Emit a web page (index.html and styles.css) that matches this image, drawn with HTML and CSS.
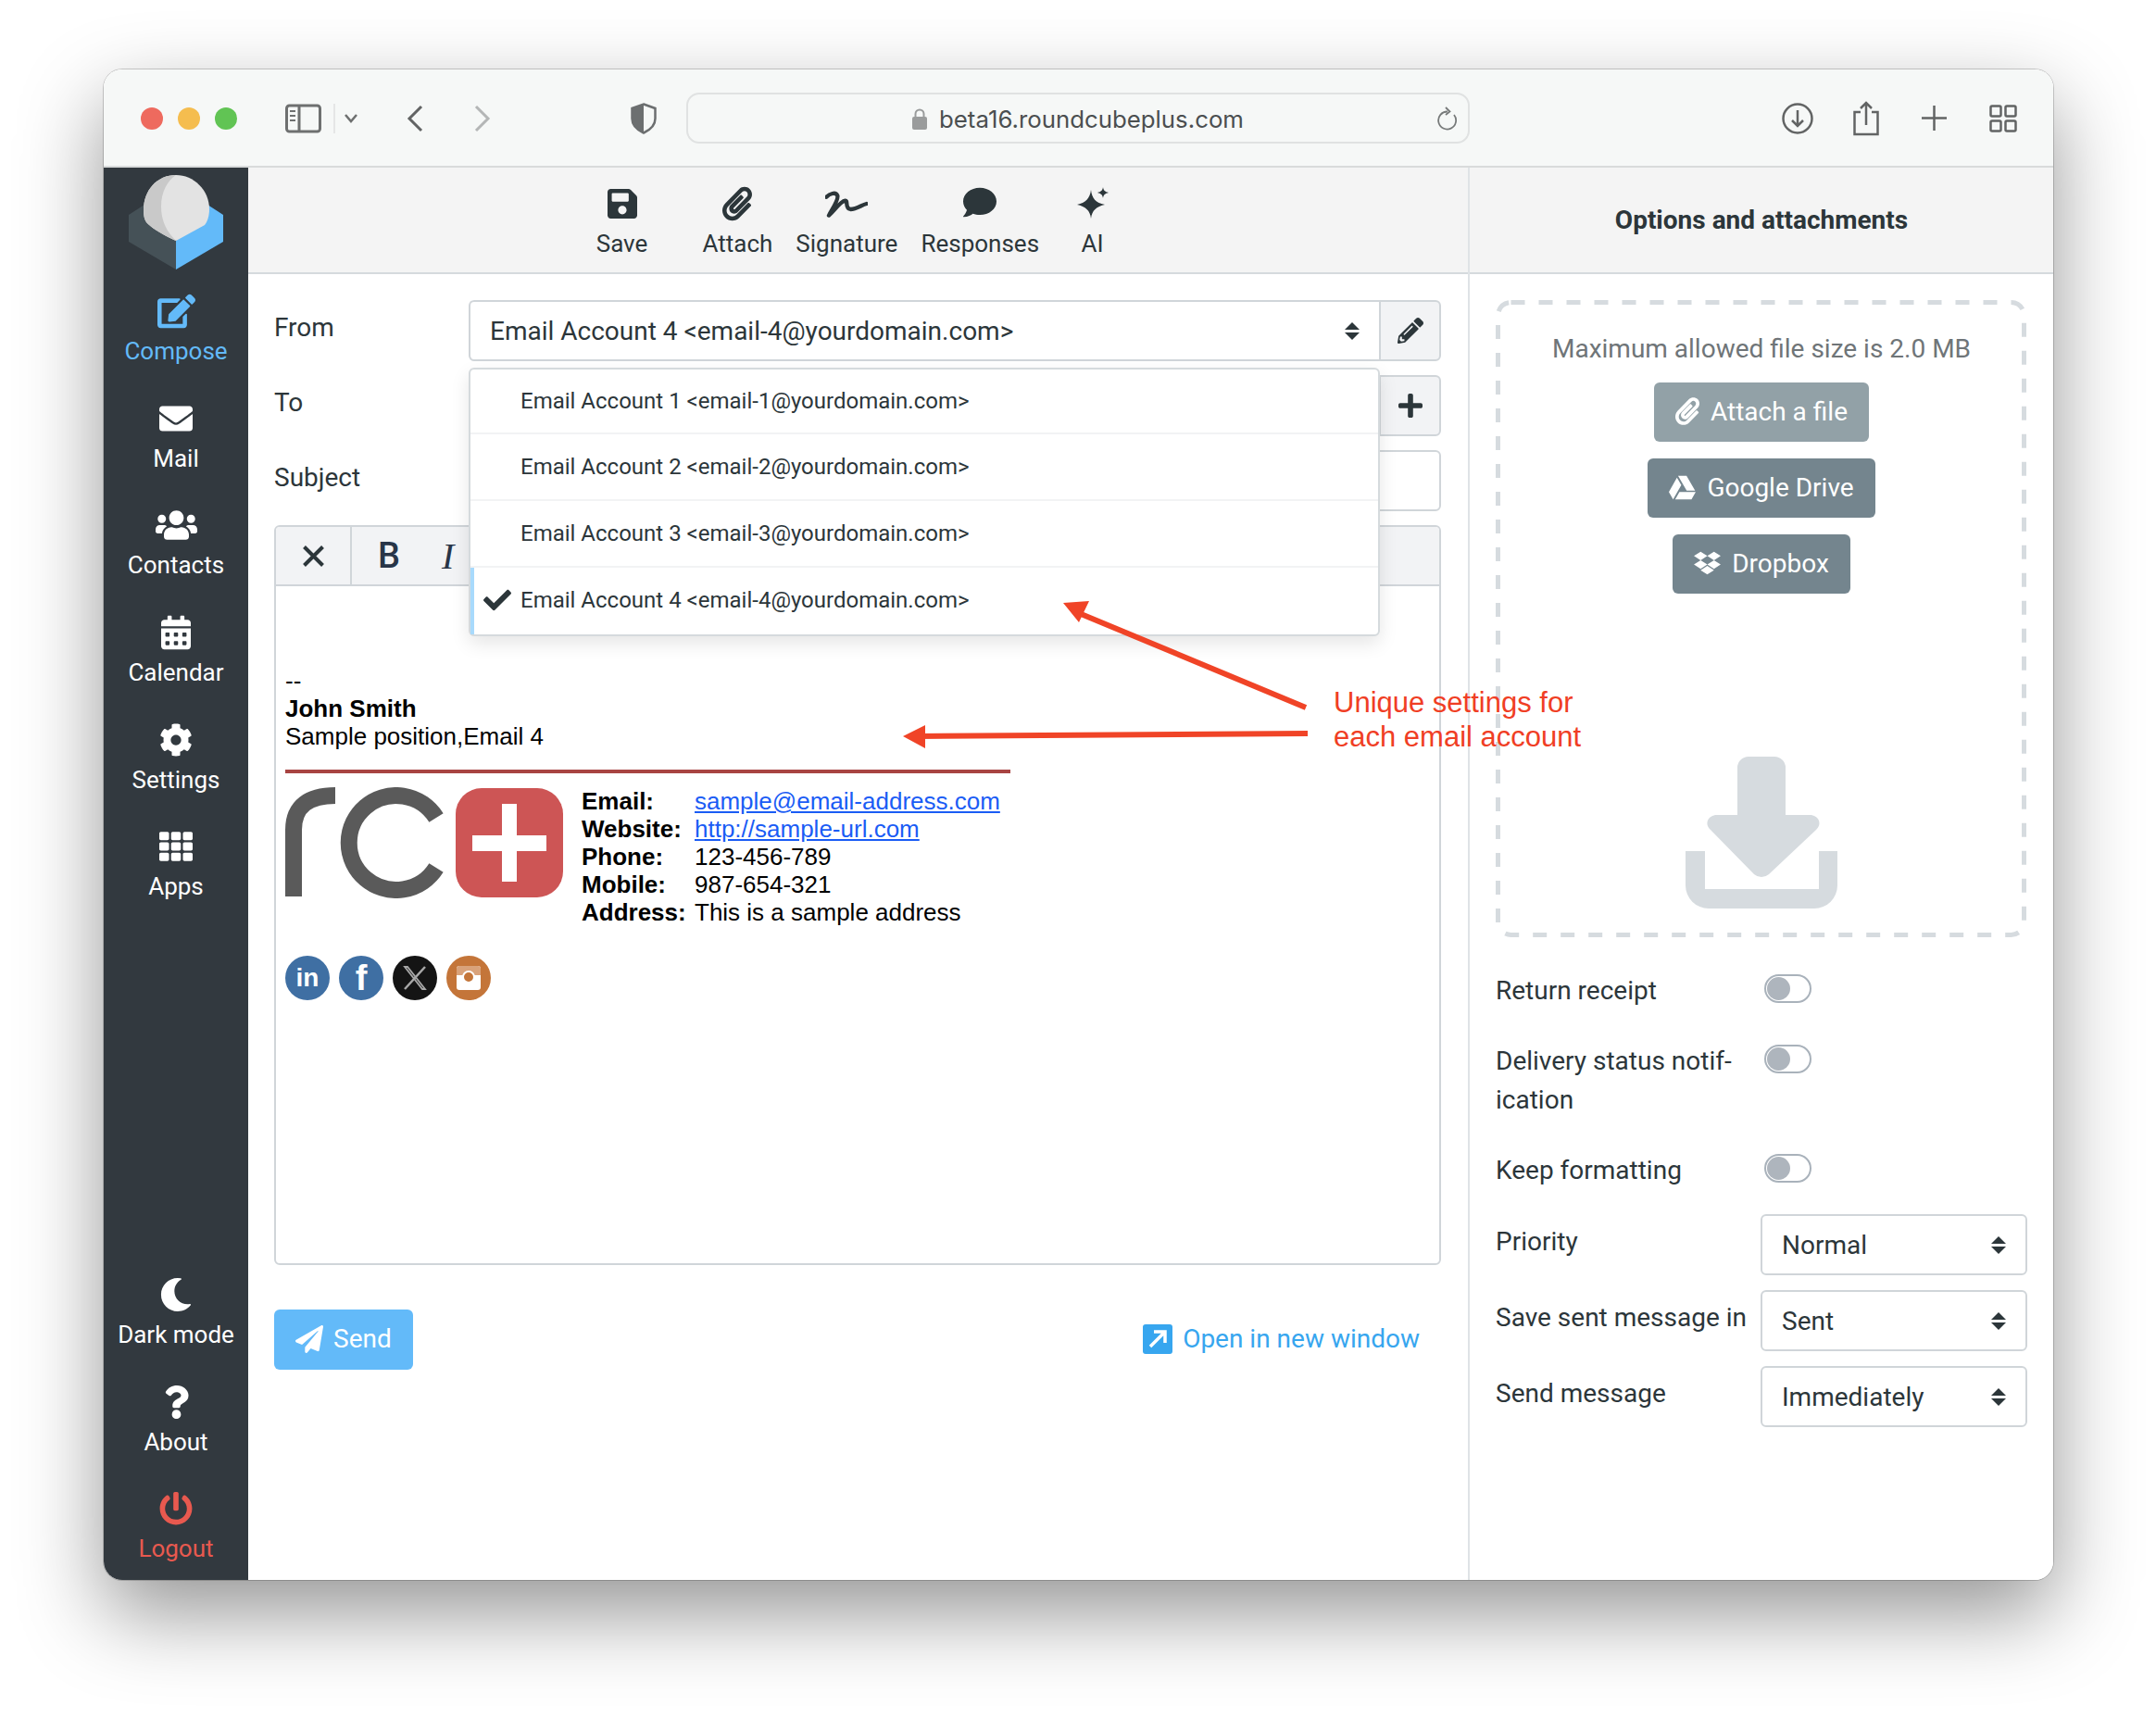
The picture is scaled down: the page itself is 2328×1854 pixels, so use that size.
FILE: index.html
```html
<!DOCTYPE html>
<html>
<head>
<meta name="viewport" content="width=device-width, initial-scale=1">
<title>Compose</title>
<link rel="stylesheet" href="styles.css">
</head>
<body>

<div class="window">

  <!-- browser chrome -->
  <header class="titlebar">
    <span class="light red"></span>
    <span class="light yellow"></span>
    <span class="light green"></span>

    <svg class="tb-side" width="80" height="32" viewBox="0 0 80 32" fill="none" stroke="#6e7070">
      <rect x="1.5" y="2" width="36" height="28" rx="3" stroke-width="3"/>
      <path d="M15 2v28" stroke-width="3"/>
      <path d="M5 8h6M5 13h6M5 18h6" stroke-width="2"/>
      <path d="M53 0v32" stroke="#dfe1e1" stroke-width="1.5"/>
      <path d="M65 12l6 7 6-7" stroke-width="2.5"/>
    </svg>
    <svg class="tb-back" width="18" height="30" viewBox="0 0 18 30" fill="none" stroke="#626464" stroke-width="3"><path d="M16 2L3 15l13 13"/></svg>
    <svg class="tb-fwd" width="18" height="30" viewBox="0 0 18 30" fill="none" stroke="#b4b6b6" stroke-width="3"><path d="M2 2l13 13L2 28"/></svg>
    <svg class="tb-shield" width="28" height="34" viewBox="0 0 28 34">
      <path d="M14 1.5L26.5 6v11c0 8-7 13-12.500 15.500C8.500 30 1.500 25 1.500 17V6z" fill="none" stroke="#6c6f70" stroke-width="2.500"/>
      <path d="M14 1.500L1.500 6v11c0 8 7 13 12.500 15.500z" fill="#6c6f70"/>
    </svg>

    <div class="url">
      <svg width="16" height="23" viewBox="0 0 16 23"><path d="M3.500 10V6a4.500 4.500 0 0 1 9 0v4" fill="none" stroke="#9a9c9c" stroke-width="2"/><rect y="9" width="16" height="14" rx="2" fill="#9a9c9c"/></svg>
      <span>beta16.roundcubeplus.com</span>
      <svg class="url-reload" width="24" height="26" viewBox="0 0 24 26" fill="none" stroke="#777a7a" stroke-width="1.800"><path d="M19 9a9.500 9.500 0 1 1-7-3.500"/><path d="M10 1l4.500 4.500L10 9"/></svg>
    </div>

    <svg class="tb-dl" width="34" height="34" viewBox="0 0 34 34" fill="none" stroke="#626464" stroke-width="2.500"><circle cx="17" cy="17" r="15.500"/><path d="M17 8v17M11 19l6 6 6-6"/></svg>
    <svg class="tb-share" width="30" height="38" viewBox="0 0 30 38" fill="none" stroke="#626464" stroke-width="2.500"><path d="M9 12H2.500v24h25V12H21"/><path d="M15 26V2M9 8l6-6 6 6"/></svg>
    <svg class="tb-plus" width="27" height="27" viewBox="0 0 27 27" stroke="#626464" stroke-width="2.500"><path d="M13.500 0v27M0 13.500h27"/></svg>
    <svg class="tb-tabs" width="30" height="30" viewBox="0 0 30 30" fill="none" stroke="#626464" stroke-width="2.500"><rect x="1.500" y="1.500" width="11" height="11" rx="1.500"/><rect x="17.500" y="1.500" width="11" height="11" rx="1.500"/><rect x="1.500" y="17.500" width="11" height="11" rx="1.500"/><rect x="17.500" y="17.500" width="11" height="11" rx="1.500"/></svg>
  </header>

  <div class="app">

    <!-- left menu -->
    <nav class="sidebar">
      <div class="logo">
        <svg width="102" height="102" viewBox="0 0 102 102">
          <path d="M0 43L20 30 51 71V102L0 72z" fill="#455157"/>
          <path d="M102 43L82 30 51 71V102L102 72z" fill="#63baf9"/>
          <path d="M51 0C70 0 87 16 87 37 87 44 85 50 82 54L51 71C40 66 25 58 19 51 17 48 16 44 16 38 16 16 31 0 51 0z" fill="#e3e3e3"/>
          <path d="M51 0C31 0 16 16 16 38 16 44 17 48 19 51 25 58 40 66 51 71 40 60 35 48 35 34 35 18 42 6 51 0z" fill="#c9c9c9"/>
        </svg>
      </div>
      <a class="nav-item active">
        <svg width="41" height="38" viewBox="0 0 576 512" fill="currentColor"><path d="M402.600 83.200l90.200 90.200c3.800 3.800 3.800 10 0 13.800L274.400 405.600l-92.800 10.300c-12.400 1.400-22.900-9.100-21.500-21.500l10.300-92.800L388.800 83.200c3.800-3.800 10-3.800 13.800 0zm162-22.900l-48.800-48.800c-15.200-15.200-39.900-15.200-55.200 0l-35.400 35.400c-3.800 3.800-3.800 10 0 13.800l90.200 90.200c3.800 3.800 10 3.800 13.800 0l35.400-35.400c15.200-15.300 15.200-40 0-55.200zM384 346.200V448H64V128h229.800c3.200 0 6.200-1.300 8.500-3.500l40-40c7.600-7.600 2.200-20.500-8.500-20.500H48C21.500 64 0 85.500 0 112v352c0 26.500 21.500 48 48 48h352c26.500 0 48-21.500 48-48V306.200c0-10.700-12.900-16-20.500-8.500l-40 40c-2.200 2.300-3.500 5.300-3.500 8.500z"/></svg>
        <span>Compose</span>
      </a>
      <a class="nav-item">
        <svg width="36" height="36" viewBox="0 0 512 512" fill="currentColor"><path d="M502.300 190.800c3.900-3.100 9.700-.2 9.700 4.700V400c0 26.500-21.500 48-48 48H48c-26.500 0-48-21.500-48-48V195.600c0-5 5.700-7.800 9.700-4.700 22.400 17.400 52.100 39.500 154.100 113.600 21.100 15.400 56.700 47.800 92.200 47.600 35.700.3 72-32.800 92.300-47.600 102-74.100 131.600-96.300 154-113.700zM256 320c23.200.4 56.600-29.200 73.400-41.400 132.700-96.300 142.800-104.700 173.400-128.700 5.800-4.500 9.200-11.500 9.200-18.900v-19c0-26.500-21.500-48-48-48H48C21.500 64 0 85.500 0 112v19c0 7.400 3.400 14.300 9.200 18.900 30.600 23.900 40.700 32.400 173.400 128.700 16.800 12.200 50.200 41.800 73.400 41.400z"/></svg>
        <span>Mail</span>
      </a>
      <a class="nav-item">
        <svg width="45" height="36" viewBox="0 0 640 512" fill="currentColor"><path d="M96 224c35.300 0 64-28.700 64-64s-28.700-64-64-64-64 28.700-64 64 28.700 64 64 64zm448 0c35.300 0 64-28.700 64-64s-28.700-64-64-64-64 28.700-64 64 28.700 64 64 64zm32 32h-64c-17.600 0-33.500 7.100-45.100 18.600 40.300 22.100 68.900 62 75.100 109.400h66c17.700 0 32-14.300 32-32v-32c0-35.300-28.700-64-64-64zm-256 0c61.900 0 112-50.100 112-112S381.900 32 320 32 208 82.100 208 144s50.100 112 112 112zm76.800 32h-8.300c-20.800 10-43.900 16-68.500 16s-47.600-6-68.500-16h-8.300C179.600 288 128 339.600 128 403.200V432c0 26.500 21.500 48 48 48h288c26.500 0 48-21.500 48-48v-28.800c0-63.600-51.600-115.200-115.200-115.200zm-223.700-13.400C161.500 263.100 145.600 256 128 256H64c-35.300 0-64 28.700-64 64v32c0 17.700 14.300 32 32 32h65.900c6.300-47.400 34.900-87.300 75.200-109.400z"/></svg>
        <span>Contacts</span>
      </a>
      <a class="nav-item">
        <svg width="32" height="37" viewBox="0 0 448 512" fill="currentColor"><path d="M0 464c0 26.500 21.500 48 48 48h352c26.500 0 48-21.500 48-48V192H0v272zm320-196c0-6.600 5.400-12 12-12h40c6.600 0 12 5.400 12 12v40c0 6.600-5.400 12-12 12h-40c-6.600 0-12-5.400-12-12v-40zm0 128c0-6.600 5.400-12 12-12h40c6.600 0 12 5.400 12 12v40c0 6.600-5.400 12-12 12h-40c-6.600 0-12-5.400-12-12v-40zM192 268c0-6.600 5.400-12 12-12h40c6.600 0 12 5.400 12 12v40c0 6.600-5.400 12-12 12h-40c-6.600 0-12-5.400-12-12v-40zm0 128c0-6.600 5.400-12 12-12h40c6.600 0 12 5.400 12 12v40c0 6.600-5.400 12-12 12h-40c-6.600 0-12-5.400-12-12v-40zM64 268c0-6.600 5.400-12 12-12h40c6.600 0 12 5.400 12 12v40c0 6.600-5.400 12-12 12H76c-6.600 0-12-5.400-12-12v-40zm0 128c0-6.600 5.400-12 12-12h40c6.600 0 12 5.400 12 12v40c0 6.600-5.400 12-12 12H76c-6.600 0-12-5.400-12-12v-40zM400 64h-48V16c0-8.800-7.200-16-16-16h-32c-8.800 0-16 7.200-16 16v48H160V16c0-8.800-7.200-16-16-16h-32c-8.800 0-16 7.200-16 16v48H48C21.500 64 0 85.500 0 112v48h448v-48c0-26.500-21.500-48-48-48z"/></svg>
        <span>Calendar</span>
      </a>
      <a class="nav-item">
        <svg width="36" height="36" viewBox="0 0 512 512" fill="currentColor"><path d="M487.400 315.700l-42.600-24.600c4.300-23.200 4.300-47 0-70.200l42.600-24.600c4.900-2.800 7.100-8.600 5.500-14-11.100-35.600-30-67.800-54.700-94.600-3.800-4.100-10-5.100-14.800-2.300L380.800 110c-17.900-15.400-38.500-27.300-60.800-35.100V25.800c0-5.600-3.900-10.500-9.400-11.700-36.700-8.200-74.300-7.800-109.200 0-5.500 1.200-9.400 6.100-9.400 11.700V75c-22.200 7.900-42.800 19.800-60.800 35.100L88.700 85.500c-4.900-2.800-11-1.900-14.800 2.300-24.700 26.700-43.600 58.900-54.700 94.600-1.700 5.400.6 11.200 5.500 14L67.300 221c-4.300 23.200-4.300 47 0 70.200l-42.600 24.600c-4.900 2.800-7.100 8.600-5.500 14 11.100 35.600 30 67.800 54.700 94.600 3.800 4.100 10 5.100 14.800 2.300l42.600-24.600c17.900 15.400 38.500 27.300 60.800 35.100v49.200c0 5.600 3.900 10.500 9.400 11.700 36.700 8.200 74.300 7.800 109.200 0 5.500-1.200 9.400-6.100 9.400-11.700v-49.200c22.200-7.900 42.800-19.800 60.800-35.100l42.600 24.600c4.900 2.800 11 1.900 14.800-2.300 24.700-26.700 43.600-58.900 54.700-94.600 1.500-5.500-.7-11.300-5.600-14.100zM256 336c-44.100 0-80-35.900-80-80s35.900-80 80-80 80 35.900 80 80-35.900 80-80 80z"/></svg>
        <span>Settings</span>
      </a>
      <a class="nav-item">
        <svg width="36" height="36" viewBox="0 0 512 512" fill="currentColor"><path d="M149.333 56v80c0 13.255-10.745 24-24 24H24c-13.255 0-24-10.745-24-24V56c0-13.255 10.745-24 24-24h101.333c13.255 0 24 10.745 24 24zm181.334 240v-80c0-13.255-10.745-24-24-24H205.333c-13.255 0-24 10.745-24 24v80c0 13.255 10.745 24 24 24h101.333c13.256 0 24.001-10.745 24.001-24zm32-240v80c0 13.255 10.745 24 24 24H488c13.255 0 24-10.745 24-24V56c0-13.255-10.745-24-24-24H387.667c-13.255 0-24 10.745-24 24zm-32 80V56c0-13.255-10.745-24-24-24H205.333c-13.255 0-24 10.745-24 24v80c0 13.255 10.745 24 24 24h101.333c13.256 0 24.001-10.745 24.001-24zm-205.334 56H24c-13.255 0-24 10.745-24 24v80c0 13.255 10.745 24 24 24h101.333c13.255 0 24-10.745 24-24v-80c0-13.255-10.745-24-24-24zM0 376v80c0 13.255 10.745 24 24 24h101.333c13.255 0 24-10.745 24-24v-80c0-13.255-10.745-24-24-24H24c-13.255 0-24 10.745-24 24zm386.667-56H488c13.255 0 24-10.745 24-24v-80c0-13.255-10.745-24-24-24H386.667c-13.255 0-24 10.745-24 24v80c0 13.255 10.745 24 24 24zm0 160H488c13.255 0 24-10.745 24-24v-80c0-13.255-10.745-24-24-24H386.667c-13.255 0-24 10.745-24 24v80c0 13.255 10.745 24 24 24zM181.333 376v80c0 13.255 10.745 24 24 24h101.333c13.255 0 24-10.745 24-24v-80c0-13.255-10.745-24-24-24H205.333c-13.255 0-24 10.745-24 24z"/></svg>
        <span>Apps</span>
      </a>

      <a class="nav-item nav-bottom">
        <svg width="36" height="36" viewBox="0 0 512 512" fill="currentColor"><path d="M283.211 512c78.962 0 151.079-35.925 198.857-94.792 7.068-8.708-.639-21.430-11.562-19.350-124.203 23.654-238.262-71.576-238.262-196.954 0-72.222 38.662-138.635 101.498-174.394 9.686-5.512 7.250-20.197-3.756-22.230A258.156 258.156 0 0 0 283.211 0c-141.309 0-256 114.511-256 256 0 141.309 114.511 256 256 256z"/></svg>
        <span>Dark mode</span>
      </a>
      <a class="nav-item">
        <svg width="27" height="36" viewBox="0 0 384 512" fill="currentColor"><path d="M202.021 0C122.202 0 70.503 32.703 29.914 91.026c-7.363 10.580-5.093 25.086 5.178 32.874l43.138 32.709c10.373 7.865 25.132 6.026 33.253-4.148 25.049-31.381 43.630-49.449 82.757-49.449 30.764 0 68.816 19.799 68.816 49.631 0 22.552-18.617 34.134-48.993 51.164-35.423 19.860-82.299 44.576-82.299 106.405V320c0 13.255 10.745 24 24 24h72.471c13.255 0 24-10.745 24-24v-5.773c0-42.860 125.268-44.645 125.268-160.627C377.504 66.256 286.902 0 202.021 0zM192 373.459c-38.196 0-69.271 31.075-69.271 69.271 0 38.195 31.075 69.270 69.271 69.270s69.271-31.075 69.271-69.271-31.075-69.270-69.271-69.270z"/></svg>
        <span>About</span>
      </a>
      <a class="nav-item logout">
        <svg width="36" height="36" viewBox="0 0 512 512" fill="currentColor"><path d="M400 54.100c63 45 104 118.600 104 201.900 0 136.800-110.800 247.700-247.500 248C120 504.300 8.200 393 8 256.400 7.900 173.100 48.900 99.300 111.800 54.200c11.700-8.300 28-4.800 35 7.700L162.600 90c5.900 10.500 3.100 23.800-6.600 31-41.500 30.800-68 79.600-68 134.900-.1 92.300 74.500 168.100 168 168.100 91.600 0 168.600-74.200 168-169.100-.3-51.800-24.700-101.800-68.100-134-9.700-7.200-12.400-20.500-6.500-30.900l15.800-28.100c7-12.400 23.200-16.100 34.800-7.800zM296 264V24c0-13.300-10.700-24-24-24h-32c-13.300 0-24 10.700-24 24v240c0 13.300 10.700 24 24 24h32c13.300 0 24-10.700 24-24z"/></svg>
        <span>Logout</span>
      </a>
    </nav>

    <!-- compose column -->
    <main class="compose">
      <div class="toolbar">
        <a class="tool tool-save">
          <svg width="32" height="36" viewBox="0 0 448 512" fill="currentColor"><path d="M433.941 129.941l-83.882-83.882A48 48 0 0 0 316.118 32H48C21.490 32 0 53.490 0 80v352c0 26.510 21.490 48 48 48h352c26.510 0 48-21.490 48-48V163.882a48 48 0 0 0-14.059-33.941zM224 416c-35.346 0-64-28.654-64-64 0-35.346 28.654-64 64-64s64 28.654 64 64c0 35.346-28.654 64-64 64zm96-304.520V212c0 6.627-5.373 12-12 12H76c-6.627 0-12-5.373-12-12V108c0-6.627 5.373-12 12-12h228.520c3.183 0 6.235 1.264 8.485 3.515l3.480 3.480A11.996 11.996 0 0 1 320 111.480z"/></svg>
          <span>Save</span>
        </a>
        <a class="tool">
          <svg width="32" height="36" viewBox="0 0 448 512" fill="currentColor"><path d="M43.246 466.142c-58.430-60.289-57.341-157.511 1.386-217.581L254.392 34c44.316-45.332 116.351-45.336 160.671 0 43.890 44.894 43.943 117.329 0 162.276L232.214 383.128c-29.855 30.537-78.633 30.111-107.982-.998-28.275-29.970-27.368-77.473 1.452-106.953l143.743-146.835c6.182-6.314 16.312-6.422 22.626-.241l22.861 22.379c6.315 6.182 6.422 16.312.241 22.626L171.427 319.927c-4.932 5.045-5.236 13.428-.648 18.292 4.372 4.634 11.245 4.711 15.688.165l182.849-186.851c19.613-20.062 19.613-52.725-.011-72.798-19.189-19.627-49.957-19.637-69.154 0L90.390 293.295c-34.763 35.560-35.299 93.120-1.191 128.313 34.010 35.093 88.985 35.137 123.058.286l172.060-175.999c6.177-6.319 16.307-6.433 22.626-.256l22.877 22.364c6.319 6.177 6.434 16.307.256 22.626l-172.060 175.998c-59.576 60.938-155.943 60.216-214.770-.485z"/></svg>
          <span>Attach</span>
        </a>
        <a class="tool">
          <svg width="46" height="36" viewBox="0 0 138 108" fill="none" stroke="currentColor" stroke-width="13" stroke-linecap="round" stroke-linejoin="round"><path d="M4 32C14 22 34 14 40 28 44 42 22 72 12 92 30 76 50 46 64 44 76 42 62 68 82 72 102 72 118 58 134 54"/></svg>
          <span>Signature</span>
        </a>
        <a class="tool">
          <svg width="36" height="36" viewBox="0 0 512 512" fill="currentColor"><path d="M256 32C114.600 32 0 125.100 0 240c0 49.600 21.400 95 57 130.700C44.500 421.100 2.700 466 2.200 466.500c-2.200 2.300-2.800 5.700-1.500 8.700S4.800 480 8 480c66.300 0 116-31.800 140.600-51.400 32.700 12.300 69 19.400 107.400 19.400 141.400 0 256-93.100 256-208S397.400 32 256 32z" transform="translate(0 -20)"/></svg>
          <span>Responses</span>
        </a>
        <a class="tool tool-ai">
          <svg width="34" height="36" viewBox="0 0 34 36" fill="currentColor"><path d="M15 3c1 9 5 14 15 16-9 2-14 6-15 15C14 25 9 21 0 19c9-2 14-7 15-16z"/><path d="M28 0c.5 3.500 2 5 6 6-4 1-5.500 2.500-6 6-.5-3.500-2-5-6-6 4-1 5.500-2.500 6-6z"/></svg>
          <span>AI</span>
        </a>
      </div>

      <div class="compose-body">
        <div class="form-row from-row">
          <label class="form-label">From</label>
          <div class="input-group">
            <div class="select-box">
              <span>Email Account 4 &lt;email-4@yourdomain.com&gt;</span>
              <svg class="spin" width="16" height="19" viewBox="0 0 16 19" fill="currentColor"><path d="M8 0l8 8H0zM0 11h16l-8 8z"/></svg>
            </div>
            <div class="addon">
              <svg width="28" height="28" viewBox="0 0 512 512" fill="currentColor"><path d="M497.900 142.100l-46.100 46.100c-4.700 4.700-12.300 4.700-17 0l-111-111c-4.700-4.700-4.700-12.300 0-17l46.100-46.100c18.700-18.700 49.100-18.700 67.900 0l60.100 60.100c18.800 18.700 18.800 49.100 0 67.900zM284.200 99.800L21.600 362.400.4 483.900c-2.900 16.400 11.400 30.600 27.800 27.800l121.500-21.300 262.600-262.600c4.700-4.700 4.700-12.300 0-17l-111-111c-4.800-4.700-12.400-4.700-17.100 0zM124.100 339.900c-5.500-5.500-5.500-14.300 0-19.800l154-154c5.500-5.500 14.300-5.500 19.800 0s5.500 14.300 0 19.800l-154 154c-5.500 5.500-14.300 5.500-19.800 0zM88 424h48v36.300l-64.500 11.300-31.100-31.100L51.700 376H88v48z"/></svg>
            </div>
          </div>

          <ul class="identity-menu">
            <li>Email Account 1 &lt;email-1@yourdomain.com&gt;</li>
            <li>Email Account 2 &lt;email-2@yourdomain.com&gt;</li>
            <li>Email Account 3 &lt;email-3@yourdomain.com&gt;</li>
            <li class="selected">
              <svg width="30" height="30" viewBox="0 0 512 512" fill="currentColor"><path d="M173.898 439.404l-166.400-166.400c-9.997-9.997-9.997-26.206 0-36.204l36.203-36.204c9.997-9.998 26.207-9.998 36.204 0L192 312.690 432.095 72.596c9.997-9.997 26.207-9.997 36.204 0l36.203 36.204c9.997 9.997 9.997 26.206 0 36.204l-294.400 294.401c-9.998 9.997-26.207 9.997-36.204-.001z"/></svg>
              Email Account 4 &lt;email-4@yourdomain.com&gt;
            </li>
          </ul>
        </div>

        <div class="form-row">
          <label class="form-label">To</label>
          <div class="input-group">
            <div class="select-box"></div>
            <div class="addon">
              <svg width="26" height="30" viewBox="0 0 448 512" fill="currentColor"><path d="M416 208H272V64c0-17.670-14.330-32-32-32h-32c-17.670 0-32 14.330-32 32v144H32c-17.670 0-32 14.330-32 32v32c0 17.670 14.330 32 32 32h144v144c0 17.670 14.330 32 32 32h32c17.670 0 32-14.330 32-32V304h144c17.670 0 32-14.330 32-32v-32c0-17.670-14.330-32-32-32z"/></svg>
            </div>
          </div>
        </div>

        <div class="form-row">
          <label class="form-label">Subject</label>
          <div class="input-group">
            <div class="select-box"></div>
          </div>
        </div>

        <div class="editor">
          <div class="editor-tools">
            <div class="editor-close">
              <svg width="23" height="23" viewBox="0 0 23 23" stroke="currentColor" stroke-width="4"><path d="M1.500 1.500l20 20M21.500 1.500l-20 20"/></svg>
            </div>
            <span class="ed-bold">B</span>
            <span class="ed-italic">I</span>
          </div>
          <div class="editor-content">
            <div class="sig-dash">--</div>
            <div><b>John Smith</b></div>
            <div>Sample position,Email 4</div>
            <div class="sig-line"></div>
            <div class="sig-card">
              <svg class="sig-logo" width="300" height="120" viewBox="0 0 300 120">
                <path d="M9 118V46C9 20 26 9 54 9" fill="none" stroke="#5a5a5a" stroke-width="18"/>
                <path d="M163 33A51 51 0 1 0 163 87" fill="none" stroke="#5a5a5a" stroke-width="18"/>
                <rect x="184" y="1" width="116" height="118" rx="28" fill="#cd5555"/>
                <path d="M202 52h80v17h-80zM234 18h16v84h-16z" fill="#fff"/>
              </svg>
              <table class="sig-table">
                <tr><th>Email:</th><td><a>sample@email-address.com</a></td></tr>
                <tr><th>Website:</th><td><a>http://sample-url.com</a></td></tr>
                <tr><th>Phone:</th><td>123-456-789</td></tr>
                <tr><th>Mobile:</th><td>987-654-321</td></tr>
                <tr><th>Address:</th><td>This is a sample address</td></tr>
              </table>
            </div>
            <div class="social">
              <span class="soc soc-blue">in</span>
              <span class="soc soc-blue soc-f">f</span>
              <span class="soc soc-black">
                <svg width="30" height="30" viewBox="0 0 30 30" fill="none" stroke="#a8a8a8"><path d="M4 3l19 24h3L7 3z" stroke-width="1.800"/><path d="M26 3L4 27" stroke-width="2.500"/></svg>
              </span>
              <span class="soc soc-orange">
                <svg width="30" height="30" viewBox="0 0 30 30"><rect x="2" y="2" width="26" height="26" rx="3" fill="#fff"/><path d="M2 5a3 3 0 0 1 3-3h20a3 3 0 0 1 3 3v7H2z" fill="#d9a27a"/><circle cx="15" cy="14" r="6" fill="#c47539" stroke="#fff" stroke-width="2"/></svg>
              </span>
            </div>
          </div>
        </div>

        <div class="send-row">
          <a class="send-btn">
            <svg width="30" height="30" viewBox="0 0 512 512" fill="currentColor"><path d="M476 3.200L12.500 270.600c-18.100 10.400-15.800 35.600 2.200 43.200L121 358.400l287.300-253.200c5.500-4.900 13.300 2.600 8.600 8.300L176 407v80.500c0 23.600 28.500 32.900 42.500 15.800L282 426l124.600 52.200c14.200 6 30.400-2.900 33-18.200l72-432C515 7.800 493.300-6.800 476 3.200z"/></svg>
            Send
          </a>
          <a class="new-window">
            <svg width="32" height="32" viewBox="0 0 32 32"><rect width="32" height="32" rx="3" fill="currentColor"/><path d="M8 24L23 9M12 8h12v12" fill="none" stroke="#fff" stroke-width="3.500"/></svg>
            Open in new window
          </a>
        </div>
      </div>
    </main>

    <!-- options column -->
    <aside class="options">
      <div class="options-head">Options and attachments</div>
      <div class="options-body">
        <div class="dropzone">
          <svg class="dropzone-dash" width="573" height="688" viewBox="0 0 573 688" fill="none"><rect x="2.500" y="2.500" width="568" height="683" rx="14" stroke="#d6dbdf" stroke-width="5" stroke-dasharray="15 15"/></svg>
          <p class="dz-hint">Maximum allowed file size is 2.0 MB</p>
          <a class="file-btn btn-attach">
            <svg width="26" height="30" viewBox="0 0 448 512" fill="currentColor"><path d="M43.246 466.142c-58.430-60.289-57.341-157.511 1.386-217.581L254.392 34c44.316-45.332 116.351-45.336 160.671 0 43.890 44.894 43.943 117.329 0 162.276L232.214 383.128c-29.855 30.537-78.633 30.111-107.982-.998-28.275-29.970-27.368-77.473 1.452-106.953l143.743-146.835c6.182-6.314 16.312-6.422 22.626-.241l22.861 22.379c6.315 6.182 6.422 16.312.241 22.626L171.427 319.927c-4.932 5.045-5.236 13.428-.648 18.292 4.372 4.634 11.245 4.711 15.688.165l182.849-186.851c19.613-20.062 19.613-52.725-.011-72.798-19.189-19.627-49.957-19.637-69.154 0L90.390 293.295c-34.763 35.560-35.299 93.120-1.191 128.313 34.010 35.093 88.985 35.137 123.058.286l172.060-175.999c6.177-6.319 16.307-6.433 22.626-.256l22.877 22.364c6.319 6.177 6.434 16.307.256 22.626l-172.060 175.998c-59.576 60.938-155.943 60.216-214.770-.485z"/></svg>
            Attach a file
          </a>
          <a class="file-btn">
            <svg width="29" height="29" viewBox="0 0 512 512" fill="currentColor"><path d="M339 314.900L175.400 32h161.200l163.600 282.900H339zm-137.500 23.600L120.900 480h310.500L512 338.500H201.500zM154.100 67.400L0 338.200 80.600 480 237 208.800 154.100 67.400z"/></svg>
            Google Drive
          </a>
          <a class="file-btn">
            <svg width="29" height="28" viewBox="0 0 528 512" fill="currentColor"><path d="M264.400 116.300l-132 84.300 132 84.300-132 84.300L0 284.100l132.300-84.300L0 116.300 132.300 32l132.100 84.300zM131.600 395.700l132-84.300 132 84.300-132 84.300-132-84.300zm132.800-111.600l132-84.300-132-83.600L395.700 32 528 116.300l-132.300 84.300L528 284.800l-132.300 84.300-131.300-85z"/></svg>
            Dropbox
          </a>
          <svg class="dz-icon" width="164" height="164" viewBox="0 0 164 164" fill="#d6dbdf">
            <path d="M56 12a12 12 0 0 1 12-12h28a12 12 0 0 1 12 12v51h26c10 0 14 10 7 16l-51 48a12 12 0 0 1-16 0L27 79c-7-6-3-16 7-16h22z"/>
            <path d="M0 102h21v41h123v-41h20v37a25 25 0 0 1-25 25H25a25 25 0 0 1-25-25z"/>
          </svg>
        </div>

        <div class="opt-toggle">
          <label class="opt-label">Return receipt</label>
          <span class="toggle"></span>
        </div>
        <div class="opt-toggle">
          <label class="opt-label">Delivery status notif-<br>ication</label>
          <span class="toggle"></span>
        </div>
        <div class="opt-toggle opt-last">
          <label class="opt-label">Keep formatting</label>
          <span class="toggle"></span>
        </div>

        <div class="opt-select">
          <label class="opt-label">Priority</label>
          <div class="select-box">
            <span>Normal</span>
            <svg class="spin" width="16" height="19" viewBox="0 0 16 19" fill="currentColor"><path d="M8 0l8 8H0zM0 11h16l-8 8z"/></svg>
          </div>
        </div>
        <div class="opt-select">
          <label class="opt-label">Save sent message in</label>
          <div class="select-box">
            <span>Sent</span>
            <svg class="spin" width="16" height="19" viewBox="0 0 16 19" fill="currentColor"><path d="M8 0l8 8H0zM0 11h16l-8 8z"/></svg>
          </div>
        </div>
        <div class="opt-select">
          <label class="opt-label">Send message</label>
          <div class="select-box">
            <span>Immediately</span>
            <svg class="spin" width="16" height="19" viewBox="0 0 16 19" fill="currentColor"><path d="M8 0l8 8H0zM0 11h16l-8 8z"/></svg>
          </div>
        </div>
      </div>
    </aside>
  </div>

  <!-- red notes drawn over the screenshot -->
  <svg class="note-arrows" width="2105" height="1631" viewBox="112 75 2105 1631">
    <path d="M1410 764L1160 660M1412 792L990 795" stroke="#f04427" stroke-width="6" fill="none"/>
    <path d="M1148 651L1176 649 1165 672zM975 795L999 783V808z" fill="#f04427"/>
  </svg>
  <div class="note-text">Unique settings for<br>each email account</div>
</div>

</body>
</html>
```

FILE: styles.css
```css
* {
  box-sizing: border-box;
}

body {
  margin: 0;
  height: 1854px;
  overflow: hidden;
  background: #fff;
  font-family: Roboto, "Liberation Sans", sans-serif;
  font-size: 28px;
  color: #2c363a;
}

a {
  text-decoration: none;
}

.window {
  position: relative;
  width: 2105px;
  height: 1631px;
  margin: 75px 0 0 112px;
  border-radius: 20px;
  overflow: hidden;
  display: flex;
  flex-direction: column;
  background: #fff;
}

/* overflow clips a shadow on the same box, so it goes on a layer behind */
body::before {
  content: "";
  position: absolute;
  left: 112px;
  top: 75px;
  width: 2105px;
  height: 1631px;
  border-radius: 20px;
  box-shadow: 0 36px 90px rgba(0, 0, 0, .42), 0 0 0 1px rgba(0, 0, 0, .18);
}

/* browser chrome */
.titlebar {
  position: relative;
  flex: 0 0 106px;
  display: flex;
  align-items: center;
  padding: 1px 0 0 40px;
  background: #f6f8f7;
  border-bottom: 2px solid #d9dbdb;
}

.light {
  width: 24px;
  height: 24px;
  border-radius: 50%;
  margin-right: 16px;
}
.red { background: #ee6a5e; }
.yellow { background: #f5bd4f; }
.green { background: #61c454; margin-right: 0; }

.tb-side { margin-left: 52px; }
.tb-back { margin-left: 51px; }
.tb-fwd { margin-left: 55px; }
.tb-shield { margin-left: 151px; }
.tb-dl { margin-left: 337px; }
.tb-share { margin-left: 42px; }
.tb-plus { margin-left: 45px; }
.tb-tabs { margin-left: 46px; }

.url {
  position: relative;
  width: 846px;
  height: 55px;
  margin-left: 32px;
  padding-top: 2px;
  display: flex;
  align-items: center;
  justify-content: center;
  gap: 13px;
  border: 2px solid #e0e2e2;
  border-radius: 14px;
  font-family: Inter, Roboto, sans-serif;
  font-size: 25.800px;
  color: #4b4f50;
}

.url-reload {
  position: absolute;
  right: 10px;
  top: 13px;
}

.app {
  flex: 1;
  display: flex;
  min-height: 0;
}

/* left menu */
.sidebar {
  flex: 0 0 156px;
  display: flex;
  flex-direction: column;
  background: #32393f;
  color: #fff;
}

.logo {
  height: 116px;
  display: flex;
  justify-content: center;
  padding-top: 8px;
}

.nav-item {
  height: 115.700px;
  display: flex;
  flex-direction: column;
  align-items: center;
  padding-top: 20px;
  color: #fff;
  font-size: 26px;
  line-height: 30px;
}

.nav-item svg {
  height: 38px;
  margin-bottom: 9px;
}

.nav-item.active { color: #63baf9; }
.nav-item.logout { color: #e8594f; }
.nav-bottom { margin-top: auto; }

/* compose column */
.compose {
  flex: 0 0 1317px;
  display: flex;
  flex-direction: column;
  min-width: 0;
}

.toolbar {
  flex: 0 0 115px;
  display: flex;
  padding-left: 329px;
  background: #f4f4f4;
  border-bottom: 2px solid #d5dadd;
}

.tool {
  min-width: 90px;
  padding: 20px 12.500px 0;
  display: flex;
  flex-direction: column;
  align-items: center;
  color: #2c363a;
  font-size: 26px;
  line-height: 30px;
}

.tool svg {
  height: 38px;
  margin-bottom: 9px;
}

.tool-save { width: 149px; }

.compose-body {
  padding: 28px 29px 0 28px;
}

.form-row {
  position: relative;
  display: flex;
  height: 66px;
  margin-bottom: 15px;
}

.form-label {
  flex: 0 0 210px;
  padding-top: 9px;
  line-height: 42px;
}

.input-group {
  flex: 1;
  display: flex;
}

.select-box {
  flex: 1;
  height: 66px;
  display: flex;
  align-items: center;
  justify-content: space-between;
  padding: 0 21px 0 21px;
  border: 2px solid #d0d5d9;
  border-radius: 6px;
}

.input-group .select-box:not(:last-child) {
  border-right: 0;
  border-radius: 6px 0 0 6px;
}

.addon {
  flex: 0 0 67px;
  display: flex;
  align-items: center;
  justify-content: center;
  background: #f2f3f5;
  border: 2px solid #d0d5d9;
  border-radius: 0 6px 6px 0;
}

.identity-menu {
  position: absolute;
  z-index: 5;
  top: 73px;
  left: 210px;
  width: 984px;
  margin: 0;
  padding: 0;
  list-style: none;
  background: #fff;
  border: 2px solid #d5dadd;
  border-radius: 6px;
  box-shadow: 0 8px 20px rgba(0, 0, 0, .1);
  font-size: 24px;
}

.identity-menu li {
  height: 72px;
  display: flex;
  align-items: center;
  padding-left: 54px;
  border-bottom: 2px solid #f2f3f4;
}

.identity-menu li:first-child {
  height: 70px;
}

.identity-menu li.selected {
  gap: 10px;
  padding: 0 0 2px 10px;
  border-left: 4px solid #a8dafc;
  border-bottom: 0;
}

/* editor */
.editor {
  height: 799px;
  border: 2px solid #d0d5d9;
  border-radius: 6px;
  overflow: hidden;
}

.editor-tools {
  height: 64px;
  display: flex;
  align-items: center;
  background: #f2f3f5;
  border-bottom: 2px solid #d0d5d9;
}

.editor-close {
  width: 82px;
  height: 100%;
  display: flex;
  align-items: center;
  justify-content: center;
  border-right: 2px solid #d0d5d9;
}

.ed-bold {
  margin-left: 28px;
  font-size: 38px;
  font-weight: 500;
  color: #283548;
}

.ed-italic {
  margin-left: 45px;
  font-family: "Liberation Serif", serif;
  font-style: italic;
  font-size: 40px;
  color: #283548;
}

.editor-content {
  padding: 87px 10px 0;
  font-family: "Liberation Sans", sans-serif;
  font-size: 26px;
  line-height: 30px;
  color: #000;
}

.sig-line {
  width: 783px;
  height: 4px;
  margin: 21px 0 15px;
  background: #a84442;
}

.sig-card {
  display: flex;
  gap: 20px;
}

.sig-table {
  border-collapse: collapse;
}

.sig-table th {
  width: 122px;
  padding: 0;
  text-align: left;
}

.sig-table td {
  padding: 0;
}

.sig-table a {
  color: #1a5cf5;
  text-decoration: underline;
}

.social {
  display: flex;
  gap: 10px;
  margin-top: 32px;
}

.soc {
  width: 48px;
  height: 48px;
  border-radius: 50%;
  display: flex;
  align-items: center;
  justify-content: center;
  color: #fff;
  font-weight: 700;
  font-size: 28px;
}

.soc-f { font-size: 38px; }
.soc-blue { background: #3f6fa3; }
.soc-black { background: #141414; }
.soc-orange { background: #c47539; }

.send-row {
  display: flex;
  align-items: center;
  justify-content: space-between;
  margin-top: 48px;
  padding-right: 23px;
}

.send-btn {
  height: 65px;
  width: 150px;
  display: flex;
  align-items: center;
  gap: 11px;
  padding: 0 0 2px 23px;
  background: #63baf9;
  border-radius: 6px;
  color: #fff;
}

.new-window {
  display: flex;
  align-items: center;
  gap: 11px;
  padding-bottom: 2px;
  color: #37a6ef;
}

/* options column */
.options {
  flex: 1;
  border-left: 2px solid #dfe3e6;
}

.options-head {
  height: 115px;
  display: flex;
  align-items: center;
  justify-content: center;
  background: #f4f4f4;
  border-bottom: 2px solid #d5dadd;
  font-weight: 700;
}

.options-body {
  padding: 28px 28px 0 28px;
}

.dropzone {
  position: relative;
  height: 688px;
  margin-bottom: 37px;
  padding-top: 32px;
  display: flex;
  flex-direction: column;
  align-items: center;
}

.dropzone-dash {
  position: absolute;
  left: 0;
  top: 0;
}

.dz-hint {
  margin: 0 0 15px;
  line-height: 42px;
  color: #6f7578;
}

.file-btn {
  height: 64px;
  margin-bottom: 18px;
  padding: 0 23px 2px;
  display: flex;
  align-items: center;
  gap: 12px;
  background: #74858e;
  border-radius: 6px;
  color: #fff;
}

.btn-attach {
  background: #92a1a7;
}

.dz-icon {
  margin-top: 158px;
}

.opt-toggle {
  display: flex;
  margin-bottom: 34px;
}

.opt-last {
  margin-bottom: 26px;
}

.opt-label {
  flex: 0 0 290px;
  line-height: 42px;
}

.toggle {
  position: relative;
  width: 51px;
  height: 31px;
  margin-top: 3px;
  border: 2px solid #a9b2bb;
  border-radius: 16px;
  background: #fff;
}

.toggle::before {
  content: "";
  position: absolute;
  left: 1px;
  top: 1px;
  width: 25px;
  height: 25px;
  border-radius: 50%;
  background: #aeb5bd;
}

.opt-select {
  display: flex;
  margin-bottom: 16px;
}

.opt-select .opt-label {
  flex-basis: 286px;
  padding-top: 9px;
}

.note-arrows {
  position: absolute;
  left: 0;
  top: 0;
  z-index: 6;
  pointer-events: none;
}

.note-text {
  position: absolute;
  z-index: 7;
  left: 1328px;
  top: 665px;
  font-family: "Liberation Sans", sans-serif;
  font-size: 31px;
  line-height: 37px;
  color: #f03e24;
}
```
